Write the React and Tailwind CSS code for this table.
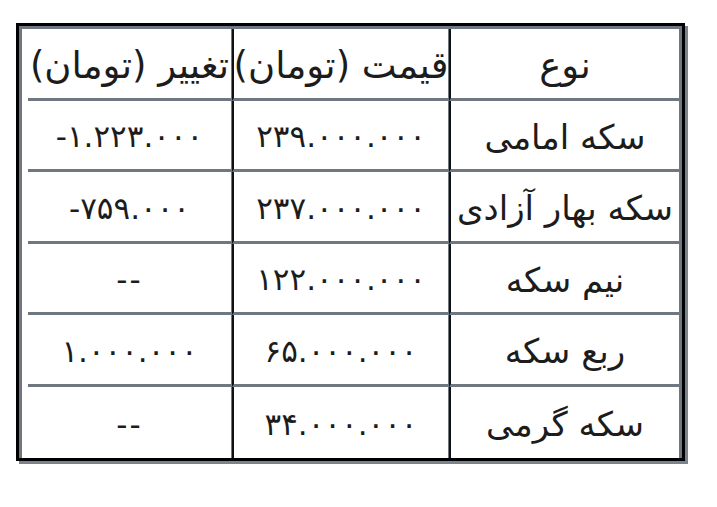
const ROWS = [
  { type: 'سکه امامی', price: '۲۳۹.۰۰۰.۰۰۰', change: '-۱.۲۲۳.۰۰۰' },
  { type: 'سکه بهار آزادی', price: '۲۳۷.۰۰۰.۰۰۰', change: '-۷۵۹.۰۰۰' },
  { type: 'نیم سکه', price: '۱۲۲.۰۰۰.۰۰۰', change: '--' },
  { type: 'ربع سکه', price: '۶۵.۰۰۰.۰۰۰', change: '۱.۰۰۰.۰۰۰' },
  { type: 'سکه گرمی', price: '۳۴.۰۰۰.۰۰۰', change: '--' },
]

const cell = 'h-[71.5px] flex items-center justify-center'

// one row of three cells, right to left
function Row({ cells, last }) {
  const line = last ? '' : 'border-b-[3px] border-b-[#6f7781]'
  return (
    <>
      <div className={`${cell} text-[34px] pt-1 border-l-2 border-l-[#111] ${line}`}>
        {cells[0]}
      </div>
      <div className={`${cell} text-[31px] tracking-[2px] pt-1 border-r border-r-[#6f7781] border-l-2 border-l-[#111] ${line}`}>
        <span dir="ltr">{cells[1]}</span>
      </div>
      <div className={`${cell} text-[31px] tracking-[2px] pt-1 border-r border-r-[#6f7781] ${line}`}>
        <span dir="ltr">{cells[2]}</span>
      </div>
    </>
  )
}

export default function App() {
  return (
    <div className="w-[717px] h-[507px] bg-white pt-[23px] pl-[16px]">
      <div className="w-[669px] border-[3px] border-black shadow-[3px_3px_0_#7b838c]">
        <div
          dir="rtl"
          className="grid grid-cols-[230px_217px_204px] border-t-[3px] border-l-[3px] border-r-[3px] border-[#6f7781] text-[#1c1c1c] leading-none"
          style={{ fontFamily: '"DejaVu Sans", sans-serif' }}
        >
          <div className={`${cell} text-[37px] pt-1 border-l-2 border-l-[#111] border-b-[3px] border-b-[#6f7781]`}>نوع</div>
          <div className={`${cell} text-[37px] pt-1 whitespace-nowrap border-r border-r-[#6f7781] border-l-2 border-l-[#111] border-b-[3px] border-b-[#6f7781]`}>قیمت (تومان)</div>
          <div className={`${cell} text-[37px] pt-1 whitespace-nowrap border-r border-r-[#6f7781] border-b-[3px] border-b-[#6f7781]`}>تغییر (تومان)</div>
          {ROWS.map((r, i) => (
            <Row key={i} cells={[r.type, r.price, r.change]} last={i === ROWS.length - 1} />
          ))}
        </div>
      </div>
    </div>
  )
}
